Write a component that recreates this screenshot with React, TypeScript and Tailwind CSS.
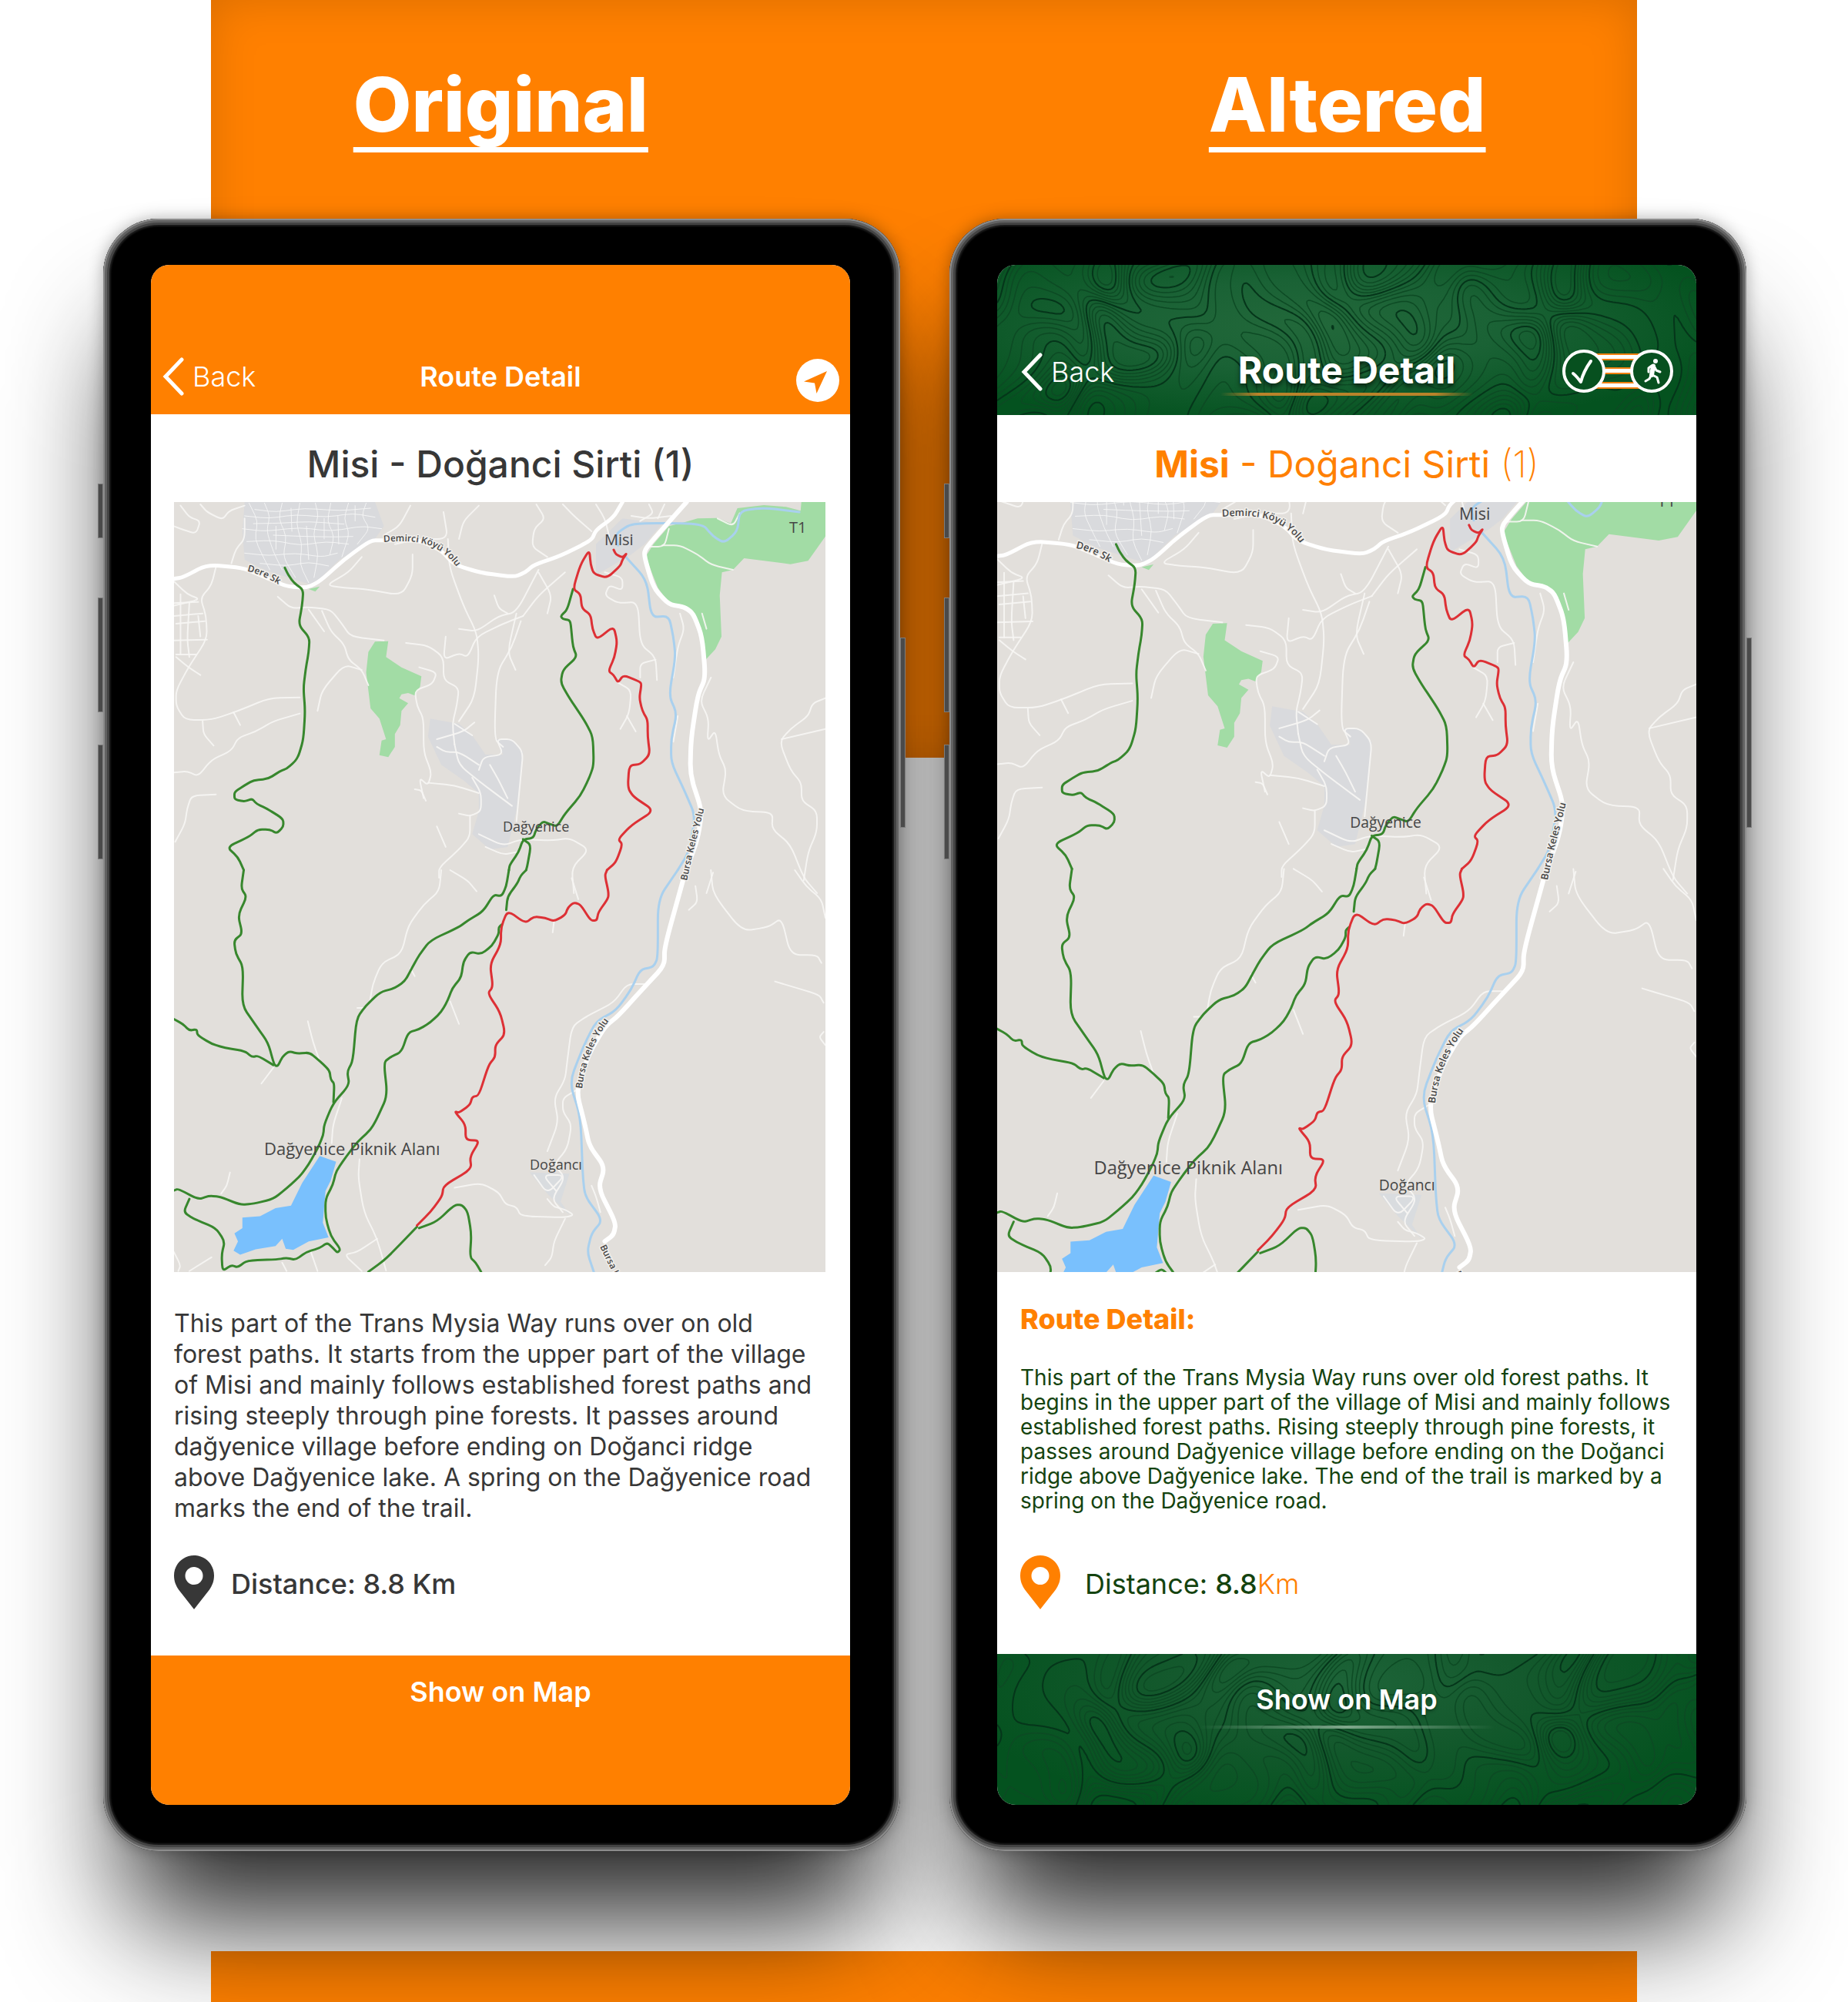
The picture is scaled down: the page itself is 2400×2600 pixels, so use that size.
import type { ReactNode } from "react";

/* ---------- contour-line artwork ---------- */

const CELL = 4;

function terrain(px: number, py: number): number {
  const x = px * 1.3;
  const y = py * 1.3;
  const wx = x + 30 * Math.sin(y / 47 + 1.3) + 16 * Math.sin(x / 31 + y / 90);
  const wy = y + 26 * Math.sin(x / 53 + 0.4) + 12 * Math.cos(y / 23 + x / 70);
  return (
    Math.sin(wx / 41) * Math.cos(wy / 36) +
    0.7 * Math.sin(wx / 67 + wy / 49 + 2) +
    0.5 * Math.cos(wx / 24 - wy / 58)
  );
}

function contour(level: number, width: number, height: number, shift: number): string {
  let d = "";
  const mix = (a: number, b: number) => (level - a) / (b - a);
  for (let y = 0; y < height; y += CELL) {
    for (let x = 0; x < width; x += CELL) {
      const a = terrain(x, y + shift);
      const b = terrain(x + CELL, y + shift);
      const c = terrain(x + CELL, y + CELL + shift);
      const e = terrain(x, y + CELL + shift);
      const p: string[] = [];
      if (a > level !== b > level) p.push(`${(x + CELL * mix(a, b)).toFixed(1)} ${y}`);
      if (b > level !== c > level) p.push(`${x + CELL} ${(y + CELL * mix(b, c)).toFixed(1)}`);
      if (e > level !== c > level) p.push(`${(x + CELL * mix(e, c)).toFixed(1)} ${y + CELL}`);
      if (a > level !== e > level) p.push(`${x} ${(y + CELL * mix(a, e)).toFixed(1)}`);
      for (let i = 0; i + 1 < p.length; i += 2) d += `M${p[i]}L${p[i + 1]}`;
    }
  }
  return d;
}

const LEVELS = [-1.75, -1.45, -1.15, -0.85, -0.55, -0.25, 0.05, 0.35, 0.65, 0.95, 1.25, 1.55, 1.85];

function Contours({ shift }: { shift: number }) {
  return (
    <svg
      aria-hidden="true"
      className="absolute inset-0 h-full w-full"
      viewBox="0 0 908 196"
      preserveAspectRatio="xMidYMid slice"
      fill="none"
    >
      {LEVELS.map((level, i) => (
        <path
          key={level}
          d={contour(level, 908, 196, shift)}
          stroke={i % 5 === 1 ? "#05351a" : "#0d4a24"}
          strokeWidth={i % 5 === 1 ? 2 : 1.5}
        />
      ))}
    </svg>
  );
}

/* ---------- route map ---------- */

const UPPER = "translate(-26 -12) scale(0.574 0.3333)";
const LOWER = "translate(-26 478) scale(0.574 0.3444)";

/* Rounds each corner a little so that the roads and trails read as curves. */
function rounded(points: string): string {
  const pts = points.split(" ").map((pair) => pair.split(",").map(Number));
  const at = (a: number[], b: number[], t: number) =>
    `${(a[0] + (b[0] - a[0]) * t).toFixed(1)} ${(a[1] + (b[1] - a[1]) * t).toFixed(1)}`;
  let d = `M${pts[0][0]} ${pts[0][1]}`;
  for (let i = 1; i < pts.length - 1; i++) {
    d += `L${at(pts[i], pts[i - 1], 0.35)}Q${pts[i][0]} ${pts[i][1]} ${at(pts[i], pts[i + 1], 0.35)}`;
  }
  const last = pts[pts.length - 1];
  return `${d}L${last[0]} ${last[1]}`;
}

function Lines({ list, color, width, opacity = 1 }: { list: string[]; color: string; width: number; opacity?: number }) {
  return (
    <g fill="none" stroke={color} strokeWidth={width} strokeOpacity={opacity} strokeLinejoin="round" strokeLinecap="round">
      {list.map((points) => (
        <path key={points} d={rounded(points)} vectorEffect="non-scaling-stroke" />
      ))}
    </g>
  );
}

const upperStreets = [
  "215,40 235,110 228,180 250,260 262,300",
  "250,40 262,90 255,150 270,230 290,300",
  "290,40 282,100 300,170 292,250 320,330",
  "330,40 322,120 335,200 330,280 350,350",
  "365,40 372,90 360,160 372,240 362,330",
  "400,40 392,110 408,170 398,240",
  "440,40 430,100 442,160 425,250",
  "480,40 470,90 488,140 460,200",
  "205,90 260,100 320,85 390,95 450,80 500,95",
  "200,140 250,150 330,135 400,150 470,130 515,140",
  "210,190 270,185 330,205 390,190 440,200",
  "205,235 260,245 320,235 380,250 415,235",
  "240,275 300,285 350,270 395,285",
  "228,65 275,75 340,60 420,70 490,60",
  "225,120 290,118 350,112 430,122",
  "270,165 340,170 410,172 450,170",
  "276,130 276,220", "310,60 312,150", "345,130 350,260", "385,100 385,180", "416,90 418,200", "455,50 455,110",
];

const upperLanes = [
  "60,50 80,95 105,110 95,160 60,140 45,130",
  "105,45 120,75 155,105 170,70 205,50",
  "205,100 205,180 185,220 175,275",
  "140,290 130,360 105,410 118,480 120,570 78,680 50,770 50,830 70,885 130,885 190,850 260,800 330,797",
  "45,345 75,395 105,415 45,440", "45,430 100,425", "45,480 110,470", "50,510 115,500", "60,395 60,630", "80,430 75,570 80,640", "100,480 105,560",
  "45,575 120,572", "50,630 95,630", "50,640 78,680 105,710",
  "110,890 112,940 135,985", "180,855 195,905",
  "45,1090 75,1085 100,1105 130,1040 175,1005 190,955 230,930 270,890 330,860",
  "140,1175 85,1180 75,1230 70,1290 48,1360",
  "520,165 555,130 580,50", "470,250 440,310 390,360 430,370 480,375 560,400 585,320 585,240",
  "545,200 600,180 665,180 655,75", "665,180 668,290 700,440 730,545 735,640 725,800 690,890",
  "690,180 700,110 735,50", "280,405 310,450 350,445 400,455 425,510 445,560 520,575",
  "350,455 385,540", "380,460 400,540 430,590 440,650 470,690 485,750",
  "370,850 380,770 430,670 470,690",
  "570,585 620,595 655,640 655,730 690,760 685,830 675,900 680,980",
  "600,680 640,700 630,745 590,770 595,830 610,880 610,1010 628,1090 620,1140 600,1110 610,1190",
  "660,560 655,650 690,625 710,640 730,560 790,510 835,480",
  "690,530 730,540 780,480 820,465 870,300", "770,400 780,450 800,470", "820,470 800,620 818,690",
  "830,500 810,600 775,700 770,960 790,990", "870,310 900,400 890,470", "930,310 870,400 835,480",
  "865,45 885,100 860,140 855,210 890,250", "925,45 950,90 990,150", "1000,45 1020,100 1030,170",
  "640,990 660,1010 690,1010 735,1060", "680,900 720,945", "640,960 700,930 725,895",
  "680,980 690,1060 740,1130 810,1220", "735,1080 745,1030 790,1020 775,960 810,960 835,1010 830,1100 820,1280",
  "720,1110 740,1170 740,1240 715,1260 690,1250", "760,1060 780,1120 800,1190",
  "590,1155 605,1160 615,1200", "620,1130 680,1140 735,1170", "715,1260 715,1340 690,1390 645,1460 645,1500",
  "735,1330 790,1375 830,1350 900,1355 940,1345 985,1390 945,1460 950,1560", "640,1300 660,1380", "750,1380 790,1410 820,1400",
  "1020,310 1060,330 1060,380 1030,360 1020,400 1050,430 1095,425 1100,590 1135,640 1138,730", "1135,650 1100,665 1100,720",
  "1050,740 1080,770 1075,860 1055,920", "1070,870 1090,930", "1190,470 1200,530 1185,600 1175,720", "1185,870 1175,970",
  "1150,205 1190,205 1230,240 1260,280 1310,300", "1165,140 1155,210 1115,210",
  "1260,720 1235,810 1255,880 1252,970 1270,925 1278,1020 1295,1080 1285,1180 1330,1240 1400,1245 1398,1310 1440,1370 1470,1500 1500,1560",
  "1519,800 1490,820 1480,870 1440,920 1415,970 1440,1080 1465,1130 1465,1200 1500,1240 1500,1320 1480,1400 1470,1510",
  "1420,960 1519,920", "1240,470 1250,530", "1265,1480 1250,1560", "1120,45 1130,80 1100,110", "1155,45 1140,100", "1080,90 1120,100 1170,90", "1275,100 1310,130 1325,80",
];

const lowerLanes = [
  "650,0 645,80 610,130 575,210 560,315 515,350 495,430 488,500", "670,0 710,40 730,80", "945,30 960,110",
  "905,195 902,235", "670,495 690,580", "348,570 360,650 375,720", "270,745 243,805",
  "580,370 590,400", "460,520 475,520", "425,860 405,960 402,1030",
  "465,1090 462,1160 475,1290 505,1390 525,1510", "505,1390 460,1440 430,1450 470,1512",
  "172,1140 165,1190 152,1220", "680,1198 740,1180 780,1215 795,1260 820,1270 830,1305 930,1310 950,1300 930,1280 905,1270 890,1240",
  "930,1315 905,1400 900,1460 885,1490",
  "1110,430 1070,430 1040,500 980,550 945,590 935,720 930,790 905,860 915,950 890,1060",
  "955,830 925,860 925,910 945,960 935,1050 905,1110 930,1160 900,1240 925,1290",
  "860,1150 890,1220 930,1150 880,1150 910,1210", "1225,60 1230,120 1210,150", "1260,0 1265,90 1330,230 1390,215 1420,180 1440,320 1500,320 1510,350",
  "1450,0 1475,60 1510,110 1519,180", "1405,420 1445,440 1505,470 1515,500", "1515,610 1505,630 1519,660", "990,1190 1000,1230 1010,1290",
  "45,1440 60,1490 55,1512", "130,1460 80,1512", "290,1480 300,1512", "355,1440 370,1512",
];

const mainRoads = [
  "45,335 65,330 120,280 200,292 240,320 300,365 345,370 375,345 430,260 490,185 520,185",
  "520,185 600,185 650,225 680,280 740,312 815,328 840,310 860,280 920,245 990,185 1000,145 1040,95 1060,36",
];

const upperGreen = [
  "296,292 303,318 316,350 338,378 335,440 327,515 352,565 350,620 343,690 338,760 342,850 338,960 328,1020 320,1045 300,1075 285,1085 258,1115 225,1120 205,1140 182,1165 182,1195 205,1203 222,1192 232,1212 255,1230 292,1270 293,1300 278,1327 262,1312 235,1312 215,1340 165,1380 190,1420 203,1470",
  "948,375 935,455 920,480 925,492 942,497 945,550 948,600 957,640 925,690 920,740 940,800 975,890 993,950 995,1060 985,1110 965,1180 930,1250 912,1300 895,1290 880,1280 865,1310 858,1345 835,1350 825,1400 805,1450 803,1470",
  "835,1350 853,1372 845,1450 842,1470",
];

const lowerGreen = [
  "203,0 197,70 210,100 190,170 200,240 181,265 185,315 202,365 199,510 230,585 258,650 272,735 280,740 290,705 305,683 325,692 352,688 375,720 397,755 400,790 408,805 406,875",
  "45,562 65,580 80,605 97,600 98,622 130,655 160,670 205,682 222,705 235,700 270,735",
  "803,0 797,60 787,98 768,93 745,155 710,190 690,215 625,265 600,320 585,365 568,418 545,445 512,460 480,510 458,560 450,720 437,760 442,810 405,880 385,960 383,1000 370,1050 350,1110 330,1155 300,1200 270,1240 225,1258 195,1262 150,1232 125,1228 100,1242 55,1202 45,1208",
  "80,1240 67,1290 90,1315 140,1350 160,1400 153,1450 155,1512 175,1490 190,1498 210,1472 280,1468 300,1462 320,1470 345,1440 375,1425 392,1405 405,1425 415,1443 422,1430 400,1380 388,1310 388,1240 405,1185 412,1135 435,1080 460,1025 490,980 505,935 528,850 520,725 535,705 560,685 575,612 600,600 625,575 650,535 665,490 675,445 695,405 700,345 715,308 740,317 765,285 780,240 780,215 787,205",
  "842,0 830,20 822,50 800,100 797,150",
  "595,1345 540,1440 520,1472 485,1515",
  "600,1350 640,1325 680,1262 697,1262 710,1290 718,1370 715,1460 728,1480 740,1515",
];

const upperRed = [
  "1040,222 1045,240 1060,252 1070,235 1060,260 1055,285 1025,332 995,315 988,280 985,222 965,280 948,375 965,395 968,450 988,475 992,530 1002,572 1040,520 1048,580 1042,640 1028,695 1040,710 1050,740 1062,710 1098,735 1103,745 1098,800 1105,850 1117,885 1117,950 1122,1020 1100,1058 1075,1062 1072,1150 1085,1185 1132,1238 1080,1295 1050,1350 1060,1370 1045,1440 1025,1470",
];

const lowerRed = [
  "1025,0 1020,20 1028,80 1028,105 1005,160 1002,190 988,190 965,130 950,122 937,140 930,170 905,193 885,180 860,175 840,200 800,152 785,215 785,280 760,355 767,440 755,465 783,535 795,618 772,660 772,705 757,735 735,850 720,855 715,885 690,915 680,910 705,960 705,1018 737,1020 715,1080 718,1128 655,1190 652,1230 625,1290 595,1340",
];

function RouteMap({ id, className }: { id: string; className: string }) {
  return (
    <svg
      role="img"
      aria-label="Map of the Misi to Doğanci Sirti route"
      className={className}
      viewBox="0 0 846 1000"
      preserveAspectRatio="xMidYMid slice"
    >
      <rect width="846" height="1000" fill="#e2dfdb" />
      <g transform={UPPER}>
        <g fill="#d9dadd">
          <polygon points="205,36 500,36 520,130 500,180 420,260 360,360 320,340 250,300 205,260 200,150" />
          <polygon points="625,880 690,900 720,945 750,1020 790,1020 775,960 810,960 835,1010 830,1100 820,1240 800,1380 760,1390 720,1330 735,1240 735,1170 700,1120 650,1060 620,950" />
          <polygon points="1000,200 1060,100 1150,120 1110,200 1080,240 1000,320" />
        </g>
        <g fill="#a2dca5">
          <polygon points="1130,200 1165,130 1200,115 1230,100 1275,98 1305,120 1320,60 1380,48 1430,55 1463,70 1465,30 1525,30 1519,170 1480,265 1440,278 1335,255 1310,300 1285,310 1280,400 1284,560 1270,610 1243,660 1243,570 1225,480 1190,435 1165,430 1140,370 1112,250" />
          <polygon points="485,620 500,580 530,578 525,640 560,680 605,715 602,755 590,790 575,780 560,785 555,800 575,820 560,850 557,905 545,940 545,990 530,1030 510,1022 515,965 525,960 510,880 490,840 480,700" />
          <polygon points="350,375 375,365 365,385" />
        </g>
        <Lines list={upperStreets} color="#f6f6f6" width={1} opacity={0.9} />
        <Lines list={upperLanes} color="#f7f6f4" width={2} opacity={0.9} />
        <Lines
          list={[
            "1050,205 1045,160 1075,125 1110,118 1240,120 1265,170 1290,195 1320,150 1325,70 1380,58 1460,75",
            "1065,245 1115,340 1125,485 1165,480 1175,560 1180,640 1165,790 1183,860 1170,960 1170,1050 1200,1160 1225,1260 1210,1400 1185,1470",
          ]}
          color="#a9d0ee"
          width={3}
        />
        <Lines list={mainRoads} color="#ffffff" width={5} />
        <Lines list={["1205,36 1115,210 1108,240 1130,370 1165,435 1200,445 1220,470 1240,560 1248,720 1230,790 1215,960 1213,1100 1240,1240 1230,1350 1200,1490"]} color="#ffffff" width={6} />
        <Lines list={upperGreen} color="#37872d" width={3} />
        <Lines list={upperRed} color="#dd3035" width={3} />
      </g>
      <g transform={LOWER}>
        <polygon fill="#d9dcdf" points="850,1140 940,1145 920,1250 940,1300 890,1220" />
        <polygon fill="#79c0fd" points="375,1078 412,1100 400,1170 388,1210 382,1330 395,1385 350,1400 315,1432 298,1428 290,1390 275,1418 230,1430 195,1450 180,1435 190,1400 182,1370 200,1350 200,1310 240,1305 275,1275 310,1265 335,1180" />
        <Lines list={lowerLanes} color="#f7f6f4" width={2} opacity={0.9} />
        <Lines list={["1185,0 1140,110 1140,330 1130,365 1100,375 1080,450 1045,530 1000,570 970,670 940,800 965,930 970,1150 975,1230 1015,1320 990,1370 980,1440 995,1515"]} color="#a9d0ee" width={3} />
        <Lines list={["1200,20 1155,290 1155,360 1110,440 1050,550 1020,590 985,690 955,830 975,960 985,1040 1020,1120 1005,1200 1045,1330 1040,1375 1020,1400"]} color="#ffffff" width={6} />
        <Lines list={lowerGreen} color="#37872d" width={3} />
        <Lines list={lowerRed} color="#dd3035" width={3} />
      </g>
      <defs>
        <path id={`${id}-demirci`} d="M272 52 Q318 48 338 59 T368 86" />
        <path id={`${id}-dere`} d="M95 90 Q116 94 140 110" />
        <path id={`${id}-keles-a`} d="M666 492 L674 455 L688 400" />
        <path id={`${id}-keles-b`} d="M530 762 Q535 715 563 676" />
        <path id={`${id}-keles-c`} d="M553 967 L575 1012" />
      </defs>
      <g fill="#454545" className="font-['Open_Sans',sans-serif]">
        <g stroke="#f1efec" strokeWidth="3" paintOrder="stroke" strokeLinejoin="round" className="text-[12px] font-semibold">
          <text><textPath href={`#${id}-demirci`}>Demirci Köyü Yolu</textPath></text>
          <text><textPath href={`#${id}-dere`}>Dere Sk</textPath></text>
          <text><textPath href={`#${id}-keles-a`}>Bursa Keles Yolu</textPath></text>
          <text><textPath href={`#${id}-keles-b`}>Bursa Keles Yolu</textPath></text>
          <text><textPath href={`#${id}-keles-c`}>Bursa K</textPath></text>
        </g>
        <text x="559" y="56" className="text-[20px] font-medium">Misi</text>
        <text x="799" y="40" className="text-[20px]">T1</text>
        <text x="427" y="428" className="text-[18px] font-medium">Dağyenice</text>
        <text x="462" y="867" className="text-[18px] font-medium">Doğancı</text>
        <text x="117" y="848" className="text-[22px]">Dağyenice Piknik Alanı</text>
      </g>
    </svg>
  );
}

/* ---------- icons ---------- */

function Chevron() {
  return (
    <svg aria-hidden="true" viewBox="0 0 30 50" className="h-[50px] w-[30px]" fill="none" stroke="currentColor" strokeWidth="5">
      <path d="M26 3 5 25l21 22" strokeLinecap="round" strokeLinejoin="miter" />
    </svg>
  );
}

function NavigateIcon() {
  return (
    <svg aria-hidden="true" viewBox="0 0 56 56" className="h-14 w-14">
      <circle cx="28" cy="28" r="28" fill="#fff" />
      <path d="M40 16 10 29.500 24 31.500 26.500 45Z" fill="#ff8000" />
    </svg>
  );
}

function Pin({ className }: { className: string }) {
  return (
    <svg aria-hidden="true" viewBox="0 0 52 70" className={className}>
      <path fill="currentColor" fillRule="evenodd" d="M26 0C11.600 0 0 11.600 0 26c0 8 2.500 13 6 18.500L26 70l20-25.500c3.500-5.500 6-10.500 6-18.500C52 11.600 40.400 0 26 0Zm0 15a11.500 11.500 0 1 1 0 23 11.500 11.500 0 0 1 0-23Z" />
    </svg>
  );
}

function TrailProgressIcon() {
  return (
    <svg aria-hidden="true" viewBox="0 0 144 56" className="h-14 w-36">
      {[5, 23, 42].map((y) => (
        <g key={y}>
          <rect x="42" y={y} width="58" height="9" fill="#f08010" />
          <rect x="42" y={y + 2} width="58" height="5" fill="#fff" />
        </g>
      ))}
      <circle cx="28" cy="28" r="26" fill="#07501f" stroke="#fff" strokeWidth="4" />
      <circle cx="116" cy="28" r="26" fill="#07501f" stroke="#fff" strokeWidth="4" />
      <path d="M14 31c4 3 6 6 10 11 3-12 8-20 13-27" fill="none" stroke="#fff" strokeWidth="4" strokeLinecap="round" strokeLinejoin="round" />
      <g fill="none" stroke="#fff" strokeLinecap="round" strokeLinejoin="round">
        <circle cx="121" cy="15" r="3" fill="#fff" stroke="none" />
        <path d="M118 21.500 116 33" strokeWidth="6" />
        <path d="m116 21-4 3v5M120 23l2 4 5 2M117 33l6 3 2 7M115 34l-2 4-5 3" strokeWidth="3" />
      </g>
    </svg>
  );
}

/* ---------- device ---------- */

function Phone({ label, children }: { label: string; children: ReactNode }) {
  return (
    <article
      aria-label={label}
      className="w-full max-w-[1035px] rounded-[72px] shadow-[0_121px_152px_-32px_rgba(0,0,0,0.85),0_0_20px_rgba(0,0,0,0.3)]"
    >
      <div className="relative z-10 rounded-[72px] bg-black py-[60px] pr-[65px] pl-[62px] shadow-[inset_0_0_0_2px_#8c8c8c,inset_0_0_0_5px_#626262,inset_0_0_0_8px_#434343,inset_0_0_2px_10px_#1c1c1c]">
        <span className="absolute top-[344px] -left-[7px] h-[71px] w-[7px] border border-[#7d7d7d] bg-[#4a4a4a]" />
        <span className="absolute top-[492px] -left-[7px] h-[149px] w-[7px] border border-[#7d7d7d] bg-[#4a4a4a]" />
        <span className="absolute top-[683px] -left-[7px] h-[149px] w-[7px] border border-[#7d7d7d] bg-[#4a4a4a]" />
        <span className="absolute top-[544px] -right-[7px] h-[247px] w-[7px] border border-[#7d7d7d] bg-[#4a4a4a]" />
        <div className="overflow-hidden rounded-3xl bg-white">{children}</div>
      </div>
    </article>
  );
}

function OriginalScreen() {
  return (
    <>
      <header className="bg-[#ff8000] px-[14px] pt-[122px] pb-4 text-white">
        <div className="grid h-14 grid-cols-[1fr_auto_1fr] items-start text-4xl/[46px]">
          <button type="button" className="flex h-[46px] items-center gap-2.5 justify-self-start font-light">
            <Chevron />
            Back
          </button>
          <h3 className="font-semibold">Route Detail</h3>
          <button type="button" aria-label="Navigate" className="justify-self-end">
            <NavigateIcon />
          </button>
        </div>
      </header>
      <h4 className="pt-[35px] pb-[19px] text-center text-5xl/[60px] font-medium text-[#373737]">Misi - Doğanci Sirti (1)</h4>
      <div className="pr-8 pl-[30px] text-[#373737]">
        <RouteMap id="original" className="block h-[1000px] w-full" />
        <p className="mt-[47px] text-[32px]/[40px]">
          This part of the Trans Mysia Way runs over on old forest paths. It starts from the upper part of the village of
          Misi and mainly follows established forest paths and rising steeply through pine forests. It passes around
          dağyenice village before ending on Doğanci ridge above Dağyenice lake. A spring on the Dağyenice road marks the
          end of the trail.
        </p>
        <div className="mt-[41px] mb-[60px] flex items-center gap-[22px]">
          <Pin className="h-[70px] w-[52px]" />
          <p className="pt-[3px] text-4xl/[46px] font-medium">Distance: 8.8 Km</p>
        </div>
      </div>
      <footer className="h-[194px] bg-[#ff8000] pt-6 text-center">
        <button type="button" className="text-4xl/[46px] font-semibold text-white">
          Show on Map
        </button>
      </footer>
    </>
  );
}

function AlteredScreen() {
  return (
    <>
      <header className="relative h-[195px] bg-[radial-gradient(ellipse_at_45%_40%,#22683a_0%,#1a6235_35%,#04521f_80%)] px-[30px] pt-[108px] text-white">
        <Contours shift={0} />
        <div className="relative grid grid-cols-[1fr_auto_1fr] items-start">
          <button type="button" className="flex h-[62px] items-center gap-2.5 justify-self-start text-4xl font-light">
            <Chevron />
            Back
          </button>
          <div className="flex flex-col items-center">
            <h3 className="text-5xl/[58px] font-bold [text-shadow:0_4px_6px_rgba(0,0,0,0.6)]">Route Detail</h3>
            <span className="h-1 w-[328px] bg-[linear-gradient(90deg,transparent,#b9832a_15%,#b9832a_85%,transparent)]" />
          </div>
          <button type="button" aria-label="Trail progress" className="mt-0.5 justify-self-end">
            <TrailProgressIcon />
          </button>
        </div>
      </header>
      <h4 className="pt-[34px] pb-[19px] text-center text-5xl/[60px] text-[#ff8000]">
        <span className="font-bold">Misi</span> - Doğanci Sirti <span className="font-extralight">(1)</span>
      </h4>
      <RouteMap id="altered" className="block h-[1000px] w-full" />
      <div className="px-[30px] text-[#14430f]">
        <h5 className="mt-[39px] text-4xl/[44px] font-extrabold text-[#ff8000]">Route Detail:</h5>
        <p className="mt-[38px] text-[28px]/[32px]">
          This part of the Trans Mysia Way runs over old forest paths. It begins in the upper part of the village of Misi
          and mainly follows established forest paths. Rising steeply through pine forests, it passes around Dağyenice
          village before ending on the Doğanci ridge above Dağyenice lake. The end of the trail is marked by a spring on
          the Dağyenice road.
        </p>
        <div className="mt-[55px] mb-[58px] flex items-center gap-8">
          <Pin className="h-[70px] w-[52px] text-[#ff8000]" />
          <p className="pt-[3px] text-4xl/[46px]">
            Distance: <span className="font-medium">8.8</span>
            <span className="font-light text-[#ff8000]">Km</span>
          </p>
        </div>
      </div>
      <footer className="relative h-[196px] bg-[radial-gradient(ellipse_at_50%_20%,#1d6438_0%,#14592d_35%,#04521f_80%)] pt-9">
        <Contours shift={410} />
        <div className="relative flex flex-col items-center gap-[11px]">
          <button type="button" className="text-4xl/[46px] font-semibold text-white [text-shadow:0_2px_4px_rgba(0,0,0,0.4)]">
            Show on Map
          </button>
          <span className="h-1 w-96 bg-[linear-gradient(90deg,transparent,#7fa88c_50%,transparent)]" />
        </div>
      </footer>
    </>
  );
}

export default function App() {
  return (
    <div className="overflow-hidden bg-white font-['Inter',sans-serif]">
      <section className="mx-[11.4%] h-[984px] bg-[#ff8000] pt-[76px] shadow-[inset_0_0_60px_rgba(0,0,0,0.15)]">
        <div className="-mx-[141px] grid grid-cols-2 gap-16 text-center text-[98px]/[120px] font-extrabold text-white underline decoration-[7px] underline-offset-[20px] [text-decoration-skip-ink:none]">
          <h2>Original</h2>
          <h2>Altered</h2>
        </div>
      </section>
      <main className="relative -mt-[700px] flex items-start justify-center gap-16 pl-0.5">
        <Phone label="Original design">
          <OriginalScreen />
        </Phone>
        <Phone label="Altered design">
          <AlteredScreen />
        </Phone>
      </main>
      <div className="mx-[11.4%] mt-[130px] h-[66px] bg-[#ff8000]" />
    </div>
  );
}
